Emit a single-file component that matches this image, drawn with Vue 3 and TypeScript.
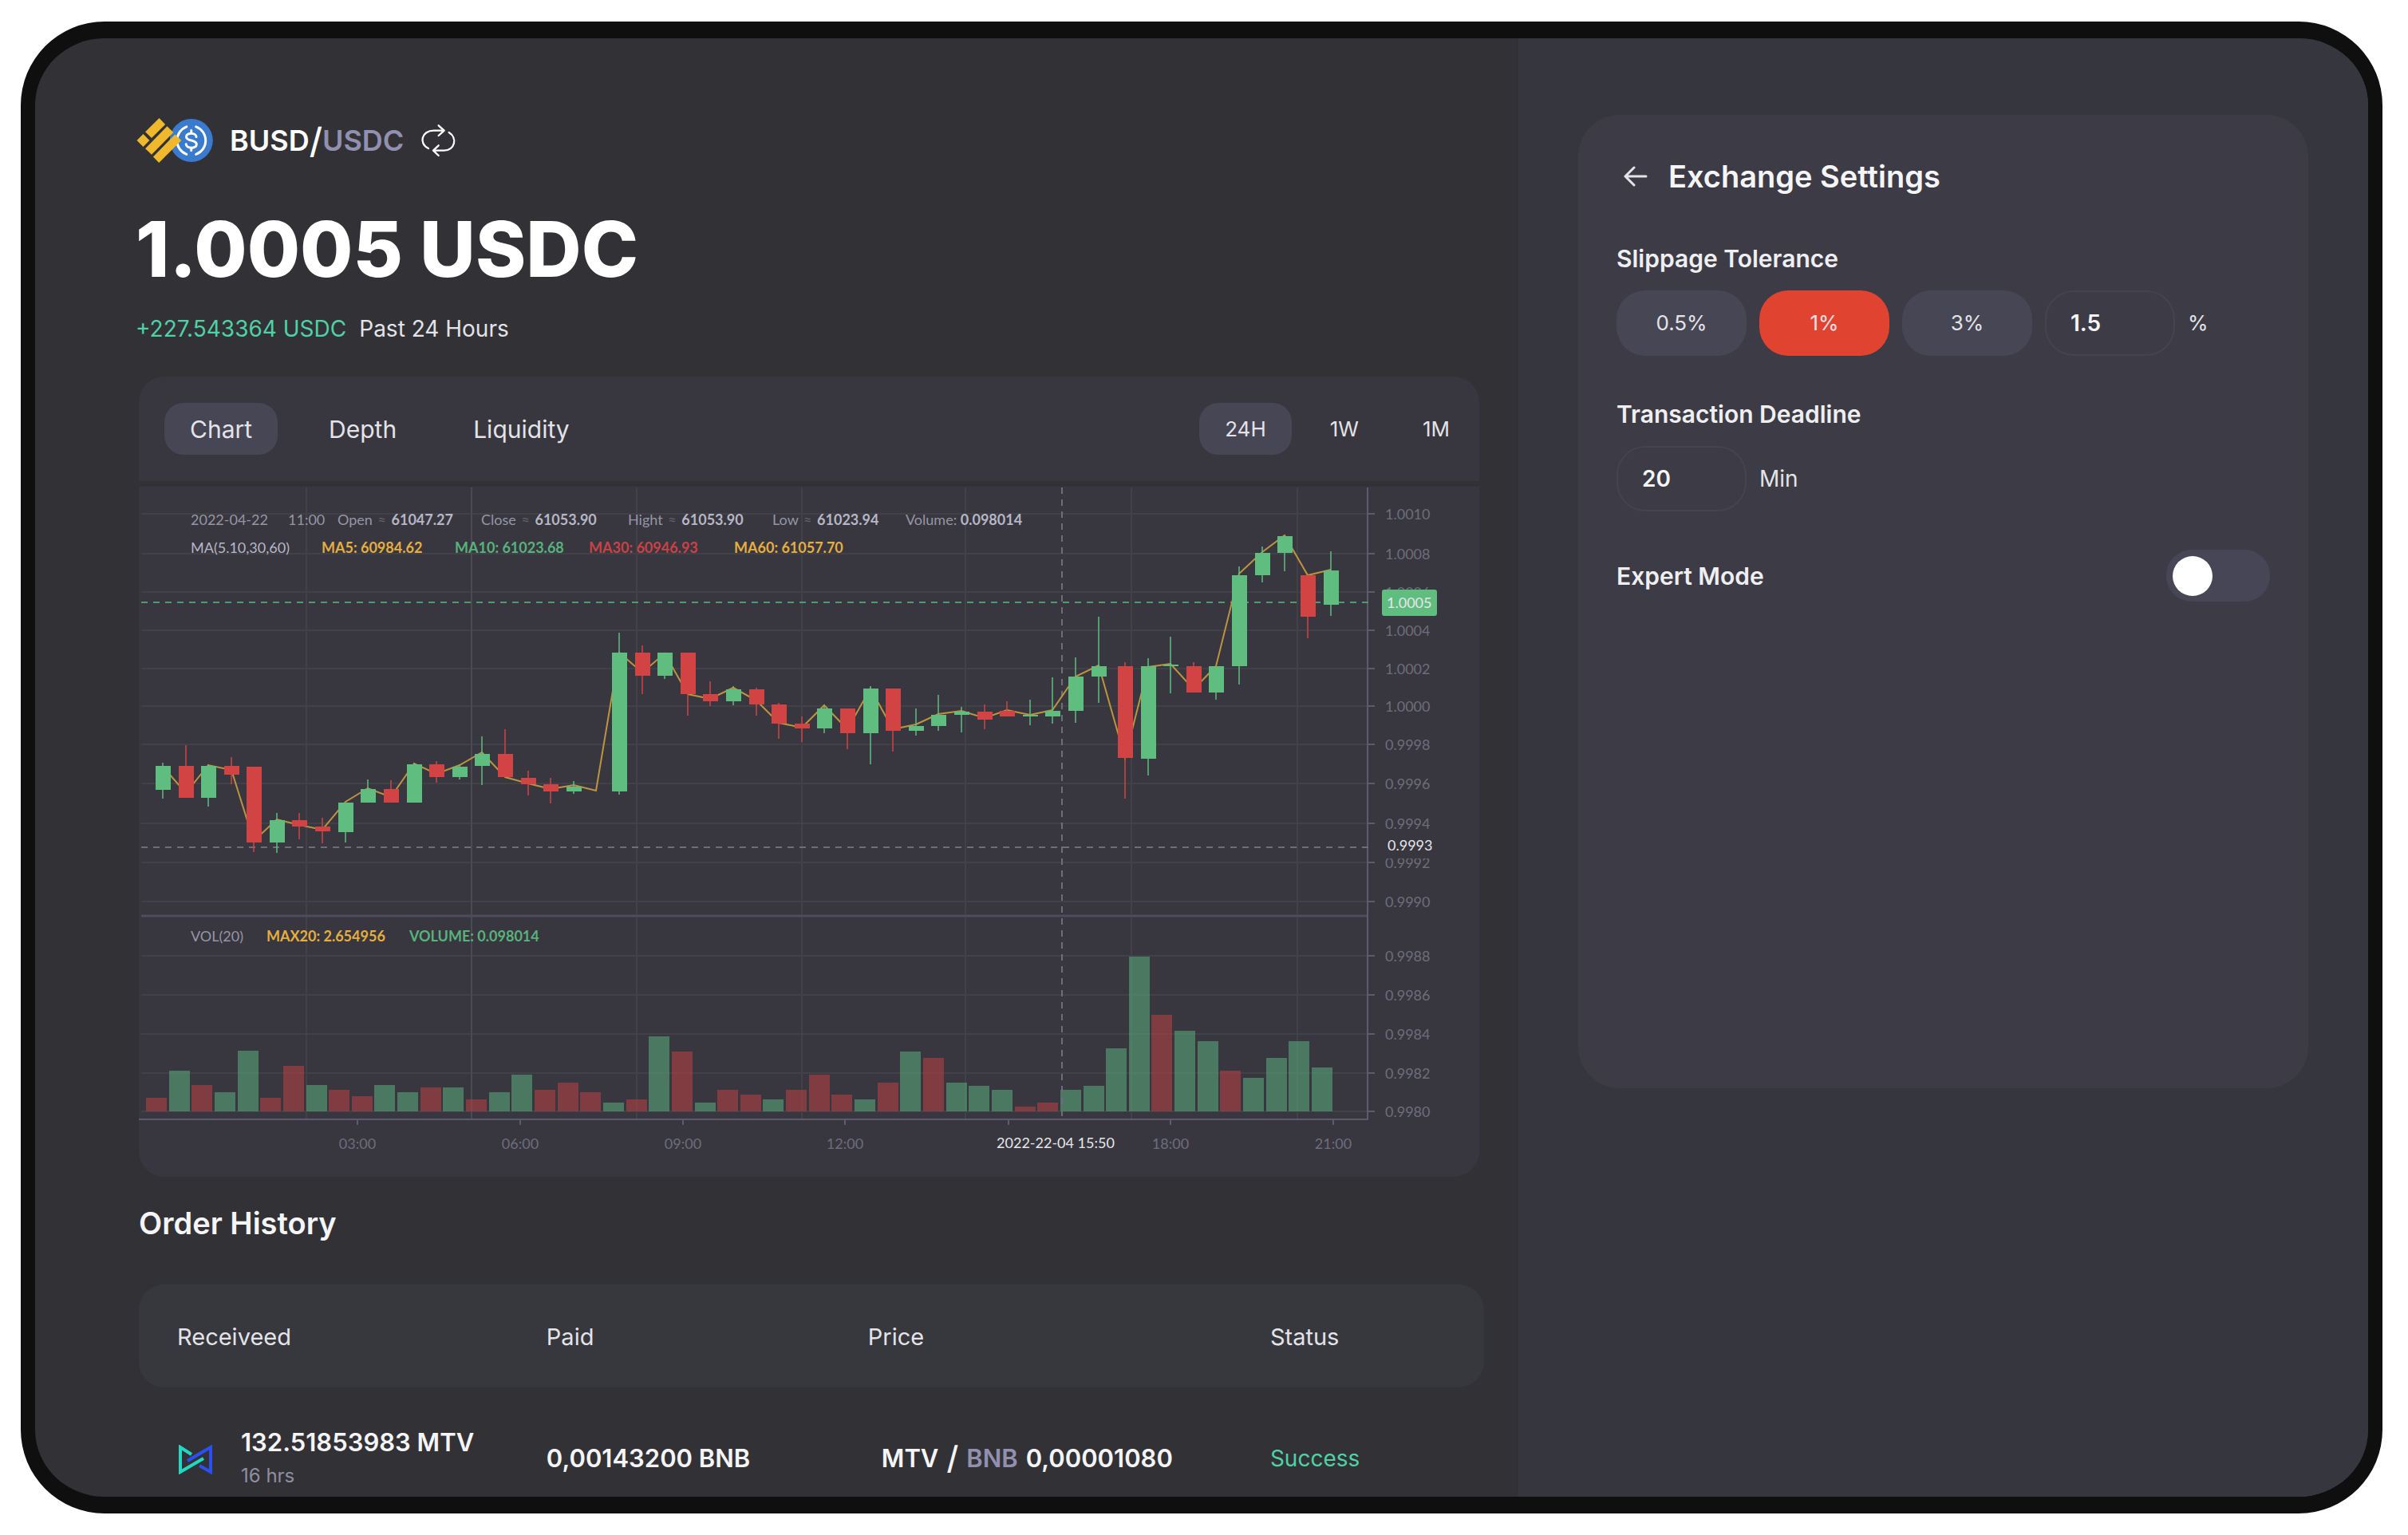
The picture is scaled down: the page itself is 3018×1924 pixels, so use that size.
<script setup lang="ts">
import { computed, ref } from 'vue'

type Tone = 'up' | 'down'
/** x centre, tone, body top, body bottom, wick top, wick bottom */
type Candle = [number, Tone, number, number, number, number]

const views = ['Chart', 'Depth', 'Liquidity']
const ranges = ['24H', '1W', '1M']
const slippages = ['0.5%', '1%', '3%']

const view = ref('Chart')
const range = ref('24H')
const slippage = ref('1%')
const customSlippage = ref('1.5')
const deadline = ref('20')
const expert = ref(false)

const quotes = [
  { label: 'Open', sign: '≈', value: '61047.27' },
  { label: 'Close', sign: '≈', value: '61053.90' },
  { label: 'Hight', sign: '≈', value: '61053.90' },
  { label: 'Low', sign: '≈', value: '61023.94' },
]

const averages = [
  { text: 'MA5: 60984.62', tone: 'gold' },
  { text: 'MA10: 61023.68', tone: 'green' },
  { text: 'MA30: 60946.93', tone: 'red' },
  { text: 'MA60: 61057.70', tone: 'gold' },
]

const candles: Candle[] = [
  [204, 'up', 960, 990, 956, 1001],
  [233, 'down', 960, 1000, 934, 1000],
  [261, 'up', 960, 1000, 958, 1011],
  [290, 'down', 960, 971, 949, 983],
  [318, 'down', 961, 1056, 961, 1068],
  [347, 'up', 1028, 1056, 1019, 1069],
  [375, 'down', 1028, 1036, 1019, 1052],
  [404, 'down', 1036, 1042, 1025, 1057],
  [433, 'up', 1006, 1043, 1006, 1056],
  [461, 'up', 989, 1006, 977, 1006],
  [490, 'down', 989, 1006, 978, 1006],
  [519, 'up', 958, 1006, 956, 1006],
  [547, 'down', 958, 974, 954, 981],
  [576, 'up', 961, 974, 958, 977],
  [604, 'up', 945, 960, 923, 984],
  [633, 'down', 945, 974, 914, 974],
  [662, 'down', 975, 983, 966, 997],
  [690, 'down', 983, 992, 975, 1007],
  [719, 'up', 986, 992, 979, 995],
  [776, 'up', 818, 992, 793, 996],
  [805, 'down', 818, 847, 809, 870],
  [833, 'up', 818, 847, 818, 851],
  [862, 'down', 818, 870, 818, 897],
  [890, 'down', 870, 879, 854, 885],
  [919, 'up', 864, 879, 860, 884],
  [948, 'down', 864, 883, 862, 897],
  [976, 'down', 883, 907, 881, 926],
  [1005, 'down', 907, 913, 898, 930],
  [1033, 'up', 888, 913, 884, 919],
  [1062, 'down', 888, 919, 888, 939],
  [1091, 'up', 863, 919, 860, 958],
  [1119, 'down', 863, 916, 863, 942],
  [1148, 'up', 910, 916, 888, 922],
  [1176, 'up', 896, 910, 871, 916],
  [1205, 'up', 892, 896, 886, 918],
  [1234, 'down', 892, 902, 883, 914],
  [1262, 'down', 891, 898, 879, 898],
  [1291, 'up', 896, 898, 877, 909],
  [1319, 'up', 891, 898, 849, 907],
  [1348, 'up', 848, 891, 824, 906],
  [1377, 'up', 835, 848, 773, 881],
  [1410, 'down', 835, 950, 830, 1001],
  [1439, 'up', 835, 951, 825, 972],
  [1467, 'up', 833, 835, 798, 869],
  [1496, 'down', 835, 868, 830, 868],
  [1524, 'up', 835, 868, 835, 877],
  [1553, 'up', 721, 835, 710, 858],
  [1582, 'up', 693, 721, 685, 730],
  [1610, 'up', 672, 693, 672, 716],
  [1639, 'down', 721, 773, 721, 800],
  [1668, 'up', 715, 758, 691, 772],
]

const averageLine =
  '204,961 233,994 261,959 290,965 318,1054 347,1027 375,1034 404,1040 433,1005 461,988 490,999 519,957 547,970 576,959 604,943 633,974 662,982 690,989 719,984 747,991 776,818 805,843 833,819 862,870 890,876 919,862 948,878 976,906 1005,912 1033,884 1062,914 1091,863 1119,914 1148,908 1176,895 1205,891 1234,900 1262,890 1291,896 1319,890 1348,848 1377,834 1410,950 1439,836 1467,832 1496,864 1524,835 1553,719 1582,692 1610,671 1639,721 1668,714'

const volumes =
  'r17 g51 r33 g24 g76 r17 r57 g33 r27 r19 g33 g24 r30 g30 r15 g24 g46 r27 r36 r24 g11 r15 g94 r75 g11 r27 r21 g15 r27 r46 r21 g15 r36 g75 r67 g36 g32 g27 r6 r11 g27 g32 g79 g194 r121 g101 g88 r51 g42 g67 g88 g55'
const bars = computed(() =>
  volumes.split(' ').map((item, i) => ({
    x: Math.round(183 + (i * 1461) / 51),
    height: Number(item.slice(1)),
    tone: item[0] === 'g' ? 'up' : 'down',
  })),
)

const columns = [384, 798, 1005, 1210, 1418, 1626]
const levels: [number, string][] = [
  [644, '1.0010'],
  [694, '1.0008'],
  [742, '1.0006'],
  [790, '1.0004'],
  [838, '1.0002'],
  [885, '1.0000'],
  [933, '0.9998'],
  [982, '0.9996'],
  [1032, '0.9994'],
  [1081, '0.9992'],
  [1130, '0.9990'],
  [1198, '0.9988'],
  [1247, '0.9986'],
  [1296, '0.9984'],
  [1345, '0.9982'],
  [1393, '0.9980'],
]
const hours: [number, string][] = [
  [448, '03:00'],
  [652, '06:00'],
  [856, '09:00'],
  [1059, '12:00'],
  [1264, ''],
  [1467, '18:00'],
  [1671, '21:00'],
]

const orders = [
  { received: '132.51853983 MTV', age: '16 hrs', paid: '0,00143200 BNB', base: 'MTV', quote: 'BNB', price: '0,00001080', status: 'Success' },
]
</script>

<template>
  <div class="device">
    <main class="market">
      <header class="hero">
        <div class="pair">
          <svg class="coins" viewBox="32 50 294 176" aria-hidden="true">
            <circle cx="242" cy="138" r="82" fill="#3a7bcd" />
            <g fill="none" stroke="#fff" stroke-width="9" stroke-linecap="round">
              <path d="M224 86A56 56 0 0 0 224 191M260 86A56 56 0 0 1 260 191" />
              <path d="M261 125C261 108 223 107 223 124C223 142 262 134 262 153C262 171 222 170 222 152M242 100V110M242 168V177" />
            </g>
            <g fill="#f0b92d">
              <path d="M120 53L143 77L91 129L67 105Z" />
              <path d="M59 114L83 138L59 162L35 138Z" />
              <path d="M150 84L174 108L91 192L67 169Z" />
              <path d="M180 115L204 138L119 223L97 200Z" />
            </g>
          </svg>
          <h1 class="pair-name">BUSD<span class="slash">/</span><span class="quote">USDC</span></h1>
          <button class="plain" type="button" aria-label="Swap pair">
            <svg class="swap" viewBox="1100 75 135 126" aria-hidden="true">
              <path d="M1130 168C1092 150 1104 101 1150 101H1186M1168 82L1189 101L1168 120M1207 108C1240 128 1230 176 1188 176H1150M1168 157L1148 176L1168 195" />
            </svg>
          </button>
        </div>
        <p class="price">1.0005 USDC</p>
        <p class="change"><span class="gain">+227.543364 USDC</span><span>Past 24 Hours</span></p>
      </header>

      <section class="chart-card" aria-label="Price chart">
        <div class="chart-head">
          <div class="tabs views">
            <button v-for="v in views" :key="v" type="button" class="tab" :class="{ active: v === view }" @click="view = v">{{ v }}</button>
          </div>
          <div class="tabs ranges">
            <button v-for="r in ranges" :key="r" type="button" class="tab" :class="{ active: r === range }" @click="range = r">{{ r }}</button>
          </div>
        </div>
        <div class="chart-body">
          <svg class="chart" viewBox="174 610 1680 865" role="img" aria-label="BUSD to USDC candles and volume">
            <g class="grid">
              <path v-for="x in columns" :key="x" :d="`M${x} 611V1403`" />
              <path v-for="[y] in levels" :key="y" :d="`M177 ${y}H1714`" />
              <path class="strong" d="M591 611V1403" />
            </g>
            <rect v-for="b in bars" :key="b.x" class="bar" :class="b.tone" :x="b.x" :y="1393 - b.height" width="26" :height="b.height" />
            <path class="divider" d="M177 1148H1714" />
            <path class="axis" d="M1714 611V1403M174 1403H1715" />
            <path v-for="[y] in levels" :key="'t' + y" class="axis" :d="`M1714 ${y}H1723`" />
            <path v-for="[x] in hours" :key="'h' + x" class="axis" :d="`M${x} 1403V1410`" />
            <path class="dash" d="M177 1062H1722M1331 611V1403" />
            <path class="dash green" d="M177 755H1722" />
            <polyline class="average" :points="averageLine" />
            <g v-for="c in candles" :key="'c' + c[0]" class="candle" :class="c[1]">
              <rect class="wick" :x="c[0] - 1" :y="c[4]" width="2" :height="c[5] - c[4]" />
              <rect :x="c[0] - 9" :y="c[2]" width="19" :height="c[3] - c[2]" />
            </g>
            <text v-for="[y, t] in levels" :key="t" class="label" x="1736" :y="y + 7">{{ t }}</text>
            <text v-for="[x, t] in hours" :key="'x' + x" class="label mid" :x="x" y="1440">{{ t }}</text>
            <rect class="mask" x="1732" y="1042" width="90" height="34" />
            <text class="label bright" x="1739" y="1066">0.9993</text>
            <rect class="tag" x="1732" y="739" width="69" height="33" rx="3" />
            <text class="label bright" x="1738" y="762">1.0005</text>
            <text class="label bright mid" x="1323" y="1439">2022-22-04 15:50</text>
          </svg>
          <div class="legend top">
            <div class="row quotes">
              <span>2022-04-22</span>
              <span>11:00</span>
              <span v-for="q in quotes" :key="q.label">{{ q.label }} <i>{{ q.sign }}</i> <b>{{ q.value }}</b></span>
              <span>Volume: <b>0.098014</b></span>
            </div>
            <div class="row averages">
              <span class="light">MA(5.10,30,60)</span>
              <b v-for="a in averages" :key="a.text" :class="a.tone">{{ a.text }}</b>
            </div>
          </div>
          <div class="legend bottom">
            <div class="row volume">
              <span>VOL(20)</span>
              <b class="gold">MAX20: 2.654956</b>
              <b class="green">VOLUME: 0.098014</b>
            </div>
          </div>
        </div>
      </section>

      <section class="orders">
        <h2 class="heading">Order History</h2>
        <table class="table">
          <thead>
            <tr>
              <th scope="col" class="col-received">Receiveed</th>
              <th scope="col" class="col-paid">Paid</th>
              <th scope="col" class="col-price">Price</th>
              <th scope="col">Status</th>
            </tr>
          </thead>
          <tbody>
            <tr v-for="o in orders" :key="o.received">
              <td>
                <div class="received">
                  <svg class="mtv" viewBox="0 0 42 37" aria-hidden="true">
                    <path d="M16 12L2 3V34L31 17" stroke="#21d9c3" />
                    <path d="M11 20L40 3V34L26 26" stroke="#2b4ff2" />
                  </svg>
                  <div>
                    <div class="strong-text">{{ o.received }}</div>
                    <div class="age">{{ o.age }}</div>
                  </div>
                </div>
              </td>
              <td class="strong-text">{{ o.paid }}</td>
              <td class="strong-text">
                <div class="rate">
                  <span>{{ o.base }}</span><span class="slash">/</span><span class="quote">{{ o.quote }}</span><span>{{ o.price }}</span>
                </div>
              </td>
              <td class="gain">{{ o.status }}</td>
            </tr>
          </tbody>
        </table>
      </section>
    </main>

    <aside class="side">
      <form class="settings" @submit.prevent>
        <div class="settings-head">
          <button class="plain" type="button" aria-label="Back">
            <svg class="back" viewBox="0 0 30 26" aria-hidden="true"><path d="M28 13H2M13 2L2 13L13 24" /></svg>
          </button>
          <h2 class="heading">Exchange Settings</h2>
        </div>

        <label class="field-label" for="slippage">Slippage Tolerance</label>
        <div class="options">
          <button v-for="s in slippages" :key="s" type="button" class="option" :class="{ chosen: s === slippage }" @click="slippage = s">{{ s }}</button>
          <input id="slippage" v-model="customSlippage" class="box" type="text" inputmode="decimal" />
          <span class="percent">%</span>
        </div>

        <label class="field-label" for="deadline">Transaction Deadline</label>
        <div class="options">
          <input id="deadline" v-model="deadline" class="box" type="text" inputmode="numeric" />
          <span>Min</span>
        </div>

        <div class="expert">
          <label class="field-label" for="expert">Expert Mode</label>
          <input id="expert" v-model="expert" class="switch" type="checkbox" role="switch" />
        </div>
      </form>
    </aside>
  </div>
</template>

<style>
body {
  margin: 0;
  background: #fff;
}
#app {
  display: flow-root;
}
</style>

<style scoped>
* {
  box-sizing: border-box;
}
.device {
  display: grid;
  grid-template-columns: 1859fr 1065fr;
  margin: 27px 32px 27px 26px;
  border: solid #0f0f0f;
  border-width: 21px 18px;
  border-radius: 105px;
  overflow: hidden;
  background: #323236;
  color: #e3e3e8;
  font-family: Inter, 'Liberation Sans', sans-serif;
  font-size: 28px;
  line-height: 40px;
}
button,
input {
  font: inherit;
  color: inherit;
  margin: 0;
}
h1,
h2,
p {
  margin: 0;
}
.plain {
  display: flex;
  padding: 0;
  border: 0;
  background: none;
}
svg {
  display: block;
}

.market {
  min-width: 0;
  padding-top: 100px;
}
.hero {
  padding-left: 126px;
}
.pair {
  display: flex;
  align-items: center;
  height: 56px;
}
.coins {
  width: 98px;
  height: 58px;
  margin-right: 20px;
}
.pair-name {
  display: flex;
  align-items: center;
  margin-right: 21px;
  color: #fff;
  font-size: 36px;
  font-weight: 600;
}
.slash {
  font-size: 44px;
  font-weight: 500;
}
.quote {
  color: #9190b0;
}
.swap {
  width: 45px;
  height: 42px;
  fill: none;
  stroke: #fff;
  stroke-width: 7;
  stroke-linecap: round;
  stroke-linejoin: round;
}
.price {
  margin-top: 60px;
  color: #fff;
  font-size: 96px;
  font-weight: 800;
  line-height: 96px;
}
.change {
  display: flex;
  gap: 16px;
  margin-top: 32px;
}
.gain {
  color: #4fd1a5;
}

.chart-card {
  margin: 40px 49px 0 130px;
}
.chart-head {
  display: flex;
  align-items: center;
  justify-content: space-between;
  height: 131px;
  margin-bottom: 7px;
  padding: 0 5px 0 32px;
  border-radius: 32px 32px 0 0;
  background: #38373f;
}
.tabs {
  display: flex;
}
.views {
  gap: 32px;
  font-size: 30px;
}
.ranges {
  gap: 16px;
  font-size: 26px;
}
.tab {
  height: 65px;
  padding: 0 32px;
  border: 0;
  border-radius: 24px;
  background: none;
}
.tab.active {
  background: #474655;
}
.chart-body {
  position: relative;
  border-radius: 0 0 32px 32px;
  overflow: hidden;
  background: #38373f;
}
.chart {
  width: 100%;
  height: auto;
}
.grid path {
  stroke: #414148;
  stroke-width: 2;
}
.grid .strong {
  stroke: #4a4a51;
}
.axis {
  fill: none;
  stroke: #5b5b6c;
  stroke-width: 2;
}
.divider {
  stroke: #4d4d5b;
  stroke-width: 3;
}
.dash {
  fill: none;
  stroke: #6e6d7b;
  stroke-width: 2;
  stroke-dasharray: 8 7;
}
.dash.green {
  stroke: #509a6d;
}
.average {
  fill: none;
  stroke: #bd9340;
  stroke-width: 2;
}
.candle.up {
  fill: #60bd80;
}
.candle.down {
  fill: #d24343;
}
.wick {
  opacity: 0.75;
}
.bar {
  opacity: 0.55;
}
.bar.up {
  fill: #5aae7c;
}
.bar.down {
  fill: #bb4244;
}
.label {
  fill: #6d6d7c;
  font-family: Lato, 'Liberation Sans', sans-serif;
  font-size: 18px;
}
.label.mid {
  text-anchor: middle;
}
.label.bright {
  fill: #e6e6ea;
}
.mask {
  fill: #38373f;
}
.tag {
  fill: #60bd80;
}
.legend {
  position: absolute;
  left: 65px;
  color: #9695a5;
  font-family: Lato, 'Liberation Sans', sans-serif;
  font-size: 18px;
  line-height: 24px;
  white-space: nowrap;
}
.legend.top {
  top: 29px;
}
.legend.bottom {
  top: 551px;
}
.row {
  display: grid;
}
.quotes {
  grid-template-columns: 122px 62px 180px 184px 181px 167px auto;
  margin-bottom: 11px;
}
.averages {
  grid-template-columns: 164px 167px 168px 182px auto;
}
.volume {
  grid-template-columns: 95px 179px auto;
}
.row i {
  margin: 0 2px;
  color: #65646f;
  font-style: normal;
}
.row b {
  font-weight: 700;
}
.quotes b,
.light {
  color: #b7b6c5;
}
.row .gold {
  color: #e5ae40;
}
.row .green {
  color: #58b27c;
}
.row .red {
  color: #cb4145;
}

.orders {
  padding: 34px 43px 0 130px;
}
.heading {
  color: #f5f5f7;
  font-size: 38px;
  font-weight: 600;
  line-height: 48px;
}
.table {
  width: 100%;
  margin-top: 53px;
  border-collapse: separate;
  border-spacing: 0;
  table-layout: fixed;
}
th {
  height: 129px;
  padding: 2px 0 0;
  background: #37373e;
  font-size: 29px;
  font-weight: 400;
  text-align: left;
}
.col-received {
  width: 30.3%;
}
.col-paid {
  width: 23.9%;
}
.col-price {
  width: 29.9%;
}
th:first-child {
  padding-left: 48px;
  border-radius: 32px 0 0 32px;
}
th:last-child {
  border-radius: 0 32px 32px 0;
}
td {
  height: 137px;
  padding: 40px 0 0;
  vertical-align: middle;
}
td:first-child {
  padding-left: 50px;
}
.rate {
  display: flex;
  align-items: center;
  gap: 10px;
  padding-left: 17px;
}
.received {
  display: flex;
  align-items: center;
  gap: 36px;
  padding-top: 4px;
}
.mtv {
  width: 42px;
  height: 37px;
  fill: none;
  stroke-width: 4;
}
.strong-text {
  color: #f5f5f7;
  font-size: 31px;
  font-weight: 600;
  white-space: nowrap;
}
.rate .slash {
  font-size: 40px;
}
.age {
  color: #8f8ea3;
  font-size: 24px;
  line-height: 44px;
}

.side {
  min-width: 0;
  padding: 96px 75px 0;
  background: #36363f;
}
.settings {
  min-height: 1220px;
  padding: 53px 48px;
  border-radius: 52px;
  background: #3d3c46;
}
.settings-head {
  display: flex;
  align-items: center;
  gap: 26px;
  margin: 0 0 59px 9px;
}
.back {
  width: 30px;
  height: 26px;
  fill: none;
  stroke: #e3e3e8;
  stroke-width: 3;
  stroke-linecap: round;
  stroke-linejoin: round;
}
.field-label {
  display: block;
  color: #efeff2;
  font-size: 30px;
  font-weight: 600;
}
.options {
  display: flex;
  align-items: center;
  gap: 16px;
  margin: 20px 0 53px;
}
.option,
.box {
  width: 163px;
  height: 82px;
  border: 0;
  border-radius: 36px;
  background: #474655;
}
.option,
.percent {
  font-size: 26px;
}
.option.chosen {
  background: #e14331;
}
.box {
  padding: 0 30px;
  border: 2px solid #44434f;
  background: none;
  color: #f5f5f7;
  font-weight: 600;
}
.expert {
  display: flex;
  align-items: center;
  justify-content: space-between;
  padding-top: 48px;
  margin-top: -53px;
}
.options + .expert {
  margin-top: -53px;
}
.switch {
  display: flex;
  align-items: center;
  appearance: none;
  width: 130px;
  height: 65px;
  padding: 0 8px;
  border-radius: 32px;
  background: #464656;
}
.switch::before {
  width: 50px;
  height: 50px;
  border-radius: 50%;
  background: #fff;
  content: '';
}
.switch:checked {
  justify-content: flex-end;
  background: #e14331;
}
</style>
